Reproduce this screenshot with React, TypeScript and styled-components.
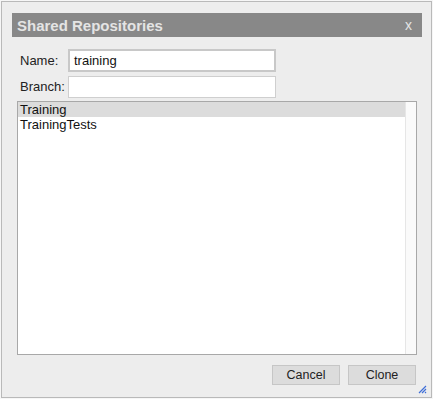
import * as React from "react";
import styled, { createGlobalStyle } from "styled-components";

const GlobalStyle = createGlobalStyle`
  html, body {
    margin: 0;
    padding: 0;
    background: #f6f6f6;
    font-family: "Liberation Sans", Arial, sans-serif;
  }
`;

const Page = styled.div`
  padding: 1px;
`;

const Dialog = styled.div`
  position: relative;
  box-sizing: border-box;
  width: 431px;
  height: 397px;
  border: 1px solid #b9b9b9;
  background: #ededed;
  padding: 11px 9px 0 10px;
  display: flex;
  flex-direction: column;
`;

const TitleBar = styled.div`
  height: 24px;
  background: #888888;
  display: flex;
  align-items: center;
  justify-content: space-between;
  padding: 0 10px 0 5px;
`;

const Title = styled.span`
  color: #e4e4e4;
  font-weight: bold;
  font-size: 15px;
`;

const Close = styled.span`
  color: #e4e4e4;
  font-size: 14px;
`;

const Form = styled.div`
  padding: 12px 0 0 5px;
  display: flex;
  flex-direction: column;
  gap: 3px;
`;

const Row = styled.div`
  display: flex;
  align-items: center;
  height: 23px;
`;

const Label = styled.label`
  width: 48px;
  padding-left: 3px;
  font-size: 13px;
  color: #222;
`;

const TextInput = styled.div<{ $focused?: boolean }>`
  box-sizing: border-box;
  width: 208px;
  height: ${(p) => (p.$focused ? 23 : 22)}px;
  background: #fff;
  border: ${(p) => (p.$focused ? "2px solid #c8c8c8" : "1px solid #cfcfcf")};
  padding-left: ${(p) => (p.$focused ? 4 : 5)}px;
  font-size: 13px;
  color: #111;
  display: flex;
  align-items: center;
`;

const List = styled.div`
  box-sizing: border-box;
  margin: 3px 0 0 5px;
  width: 400px;
  height: 254px;
  border: 1px solid #a8a8a8;
  background: #fff;
  display: flex;
`;

const Items = styled.div`
  flex: 1;
`;

const Item = styled.div<{ $selected?: boolean }>`
  height: 15px;
  line-height: 15px;
  padding-left: 2px;
  font-size: 13px;
  color: #111;
  background: ${(p) => (p.$selected ? "#dcdcdc" : "transparent")};
`;

const Scroll = styled.div`
  width: 10px;
  background: #fafafa;
  border-left: 1px solid #e6e6e6;
`;

const Footer = styled.div`
  display: flex;
  justify-content: flex-end;
  gap: 8px;
  padding: 10px 1px 0 0;
  width: 400px;
  margin-left: 5px;
  box-sizing: border-box;
`;

const Button = styled.button`
  box-sizing: border-box;
  width: 68px;
  height: 20px;
  background: #dcdcdc;
  border: 1px solid #c6c6c6;
  font-family: "Liberation Sans", Arial, sans-serif;
  font-size: 12.5px;
  color: #222;
  padding: 0;
`;

const Grip = styled.svg`
  position: absolute;
  right: 4px;
  bottom: 3px;
`;

export default function App() {
  return (
    <Page>
      <GlobalStyle />
      <Dialog>
        <TitleBar>
          <Title>Shared Repositories</Title>
          <Close>x</Close>
        </TitleBar>
        <Form>
          <Row>
            <Label>Name:</Label>
            <TextInput $focused>training</TextInput>
          </Row>
          <Row>
            <Label>Branch:</Label>
            <TextInput />
          </Row>
        </Form>
        <List>
          <Items>
            <Item $selected>Training</Item>
            <Item>TrainingTests</Item>
          </Items>
          <Scroll />
        </List>
        <Footer>
          <Button>Cancel</Button>
          <Button>Clone</Button>
        </Footer>
        <Grip width="9" height="9" viewBox="0 0 9 9">
          <path d="M8 1 L1 8 M8 4 L4 8 M8 7 L7 8" stroke="#3f6fd8" strokeWidth="1.2" />
        </Grip>
      </Dialog>
    </Page>
  );
}
